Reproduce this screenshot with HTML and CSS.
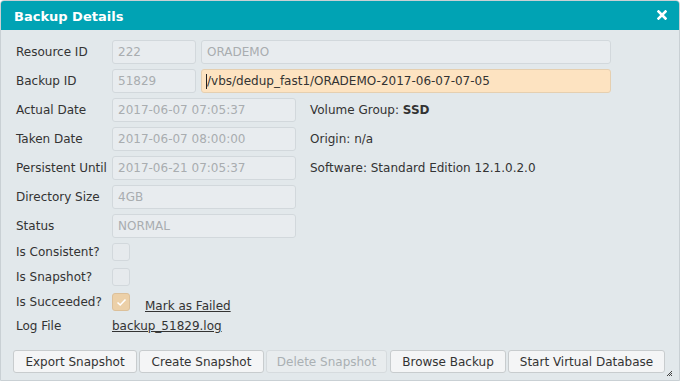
FILE: index.html
```html
<!DOCTYPE html>
<html>
<head>
<meta charset="utf-8">
<link rel="stylesheet" href="styles.css">
</head>
<body>
<div class="dialog">
  <div class="titlebar">
    <span class="title">Backup Details</span>
    <span class="close">
      <svg width="10" height="10" viewBox="0 0 10 10"><path d="M1.5 1.5 L8.5 8.5 M8.5 1.5 L1.5 8.5" stroke="#fff" stroke-width="2.6" stroke-linecap="square"/></svg>
    </span>
  </div>
  <div class="content">
    <div class="form">
      <div class="row">
        <span class="label">Resource ID</span>
        <div class="field short">222</div>
        <div class="field wide">ORADEMO</div>
      </div>
      <div class="row">
        <span class="label">Backup ID</span>
        <div class="field short">51829</div>
        <div class="field wide active"><span class="caret"></span>/vbs/dedup_fast1/ORADEMO-2017-06-07-07-05</div>
      </div>
      <div class="row">
        <span class="label">Actual Date</span>
        <div class="field medium">2017-06-07 07:05:37</div>
        <span class="info">Volume Group: <b>SSD</b></span>
      </div>
      <div class="row">
        <span class="label">Taken Date</span>
        <div class="field medium">2017-06-07 08:00:00</div>
        <span class="info">Origin: n/a</span>
      </div>
      <div class="row">
        <span class="label">Persistent Until</span>
        <div class="field medium">2017-06-21 07:05:37</div>
        <span class="info">Software: Standard Edition 12.1.0.2.0</span>
      </div>
      <div class="row">
        <span class="label">Directory Size</span>
        <div class="field medium">4GB</div>
      </div>
      <div class="row">
        <span class="label">Status</span>
        <div class="field medium">NORMAL</div>
      </div>
      <div class="row check">
        <span class="label">Is Consistent?</span>
        <span class="box"></span>
      </div>
      <div class="row check">
        <span class="label">Is Snapshot?</span>
        <span class="box"></span>
      </div>
      <div class="row check">
        <span class="label">Is Succeeded?</span>
        <span class="box checked">
          <svg width="11" height="9" viewBox="0 0 11 9"><path d="M1.5 4.5 L4.2 7 L9.5 1.5" fill="none" stroke="#fff" stroke-width="1.6"/></svg>
        </span>
        <a class="link mark" href="#">Mark as Failed</a>
      </div>
      <div class="row log">
        <span class="label">Log File</span>
        <a class="link" href="#">backup_51829.log</a>
      </div>
    </div>
    <div class="buttons">
      <button class="btn b-export">Export Snapshot</button>
      <button class="btn b-create">Create Snapshot</button>
      <button class="btn b-delete disabled">Delete Snapshot</button>
      <button class="btn b-browse">Browse Backup</button>
      <button class="btn b-start">Start Virtual Database</button>
    </div>
    <span class="grip">
      <svg width="7" height="7" viewBox="0 0 7 7"><path d="M6 1 L1 6 M6 3 L3 6 M6 5 L5 6" stroke="#444" stroke-width="1"/></svg>
    </span>
  </div>
</div>
</body>
</html>
```
FILE: styles.css
```css
* { box-sizing: border-box; }
html, body {
  margin: 0;
  padding: 0;
  width: 680px;
  height: 381px;
  overflow: hidden;
  background: #ffffff;
}
body {
  font-family: "DejaVu Sans", Verdana, sans-serif;
  font-size: 12px;
  color: #333;
}
.dialog {
  width: 680px;
  height: 381px;
  border: 1px solid #c9d0d4;
  border-radius: 4px 4px 0 0;
  background: #e2e8eb;
  display: flex;
  flex-direction: column;
  overflow: hidden;
}
.titlebar {
  height: 29px;
  background: #00a3b4;
  display: flex;
  align-items: center;
  justify-content: space-between;
  padding: 0 12px 0 13px;
  flex: none;
}
.title {
  color: #fff;
  font-weight: bold;
  font-size: 13px;
  padding-top: 1px;
}
.close {
  display: flex;
  margin-top: -2px;
}
.content {
  position: relative;
  flex: 1;
  padding: 10px 15px 0 12px;
  display: flex;
  flex-direction: column;
}
.form {
  display: flex;
  flex-direction: column;
  gap: 5px;
}
.row {
  display: flex;
  align-items: center;
  height: 24px;
}
.label {
  width: 99px;
  flex: none;
  padding-left: 3px;
  white-space: nowrap;
}
.field {
  height: 24px;
  border: 1px solid #d2d8dc;
  border-radius: 3px;
  background: #e8ecef;
  color: #a9adb0;
  padding: 0 5px;
  display: flex;
  align-items: center;
  white-space: nowrap;
  flex: none;
}
.short { width: 84px; margin-right: 5px; }
.wide { width: 410px; }
.medium { width: 184px; }
.active {
  background: #fde3c1;
  border-color: #e5cfb0;
  color: #333;
  padding-left: 4px;
}
.caret {
  display: inline-block;
  width: 1px;
  height: 15px;
  background: #222;
}
.info {
  margin-left: 14px;
  white-space: nowrap;
}
.row.check {
  height: 20px;
  align-items: flex-start;
}
.row.check .label {
  margin-top: 2px;
}
.box {
  width: 18px;
  height: 18px;
  border: 1px solid #d2d8dc;
  border-radius: 3px;
  background: #e6eaed;
  display: flex;
  align-items: center;
  justify-content: center;
  flex: none;
}
.box.checked {
  background: #ecd0a8;
  border-color: #dcc09a;
}
.link {
  color: #333;
  text-decoration: underline;
  white-space: nowrap;
}
.mark {
  margin-left: 15px;
  margin-top: 6px;
}
.row.log {
  height: 16px;
}
.buttons {
  display: flex;
  gap: 2px;
  margin-top: 16px;
  padding-left: 0;
}
.btn {
  font-family: "DejaVu Sans", Verdana, sans-serif;
  font-size: 12px;
  color: #333;
  height: 23px;
  background: #f4f5f6;
  border: 1px solid #c8ccce;
  border-radius: 3px;
  padding: 0;
  margin: 0;
  white-space: nowrap;
  flex: none;
  text-align: center;
}
.b-export { width: 124px; }
.b-create { width: 125px; }
.b-delete { width: 121px; }
.b-browse { width: 116px; margin-left: 1px; }
.b-start { width: 157px; }
.btn.disabled {
  color: #aab0b3;
  border-color: #d6dbde;
  background: #e8ecee;
}
.grip {
  position: absolute;
  right: 6px;
  bottom: 3px;
  display: flex;
}
```
